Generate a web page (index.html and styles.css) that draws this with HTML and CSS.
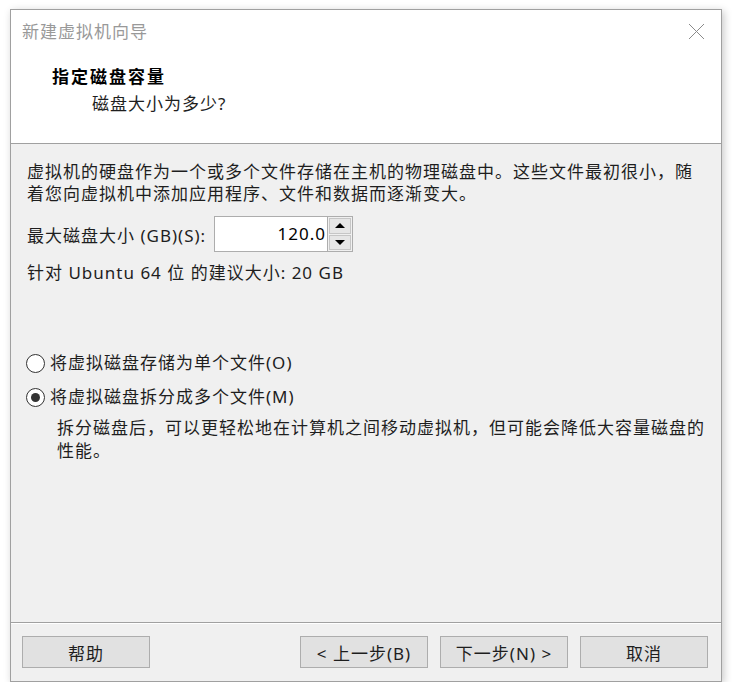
FILE: index.html
```html
<!DOCTYPE html>
<html lang="zh-CN">
<head>
  <meta charset="UTF-8">
  <title>新建虚拟机向导</title>
  <link rel="stylesheet" href="styles.css">
</head>
<body>

  <div class="window">
    <div class="head">
      <div class="titlebar">
        <span class="title">新建虚拟机向导</span>
        <svg class="close" width="17" height="17" viewBox="0 0 17 17">
          <path d="M1 1 L16 16 M16 1 L1 16" stroke="#8a8a8a" stroke-width="1" fill="none"/>
        </svg>
      </div>
      <h1>指定磁盘容量</h1>
      <p class="sub">磁盘大小为多少?</p>
    </div>

    <div class="body">
      <p class="intro">虚拟机的硬盘作为一个或多个文件存储在主机的物理磁盘中。这些文件最初很小，随<br>着您向虚拟机中添加应用程序、文件和数据而逐渐变大。</p>

      <div class="size-row">
        <label>最大磁盘大小 (GB)(S):</label>
        <div class="spin">
          <span class="value">120.0</span>
          <div class="arrows">
            <span class="arrow up"></span>
            <span class="arrow down"></span>
          </div>
        </div>
      </div>

      <p class="hint">针对 Ubuntu 64 位 的建议大小: 20 GB</p>

      <div class="options">
        <div class="radio"><span class="dot"></span>将虚拟磁盘存储为单个文件(O)</div>
        <div class="radio checked"><span class="dot"></span>将虚拟磁盘拆分成多个文件(M)</div>
        <p class="note">拆分磁盘后，可以更轻松地在计算机之间移动虚拟机，但可能会降低大容量磁盘的<br>性能。</p>
      </div>
    </div>

    <div class="footer">
      <button class="btn">帮助</button>
      <div class="nav">
        <button class="btn">&lt; 上一步(B)</button>
        <button class="btn">下一步(N) &gt;</button>
        <button class="btn">取消</button>
      </div>
    </div>
  </div>

</body>
</html>
```

FILE: styles.css
```css
:root {
  --face: #f0f0f0;
  --edge: #a0a0a0;
  --btn: #e1e1e1;
  --btn-edge: #adadad;
  --ink: #1e1e1e;
}
* { box-sizing: border-box; }
body {
  margin: 0;
  background: #fff;
  font-family: "Noto Sans", "Noto Sans CJK SC", sans-serif;
  font-size: 17px;
  letter-spacing: 1px;
  color: var(--ink);
}
.window {
  margin: 9px 0 0 10px;
  width: 712px;
  height: 673px;
  border: 1px solid var(--edge);
  background: var(--face);
  box-shadow: 2px 2px 8px rgba(0, 0, 0, 0.22);
  display: flex;
  flex-direction: column;
}

/* header */
.head {
  height: 134px;
  background: #fff;
  border-bottom: 1px solid var(--edge);
}
.titlebar {
  height: 44px;
  display: flex;
  align-items: center;
  justify-content: space-between;
  padding: 0 16px 0 11px;
}
.title {
  color: #999;
  font-size: 17px;
  line-height: 44px;
}
.close { margin-top: -2px; }
.head h1 {
  margin: 12px 0 0 41px;
  font-size: 17px;
  line-height: 22px;
  font-weight: bold;
  letter-spacing: 2px;
  color: #000;
}
.sub {
  margin: 5px 0 0 81px;
  line-height: 22px;
}

/* body */
.body {
  flex: 1;
  padding: 17px 16px 0;
}
.body p { margin: 0; }
.intro { line-height: 22px; }
.size-row {
  display: flex;
  align-items: center;
  margin-top: 11px;
}
.size-row label { width: 187px; }
.spin {
  display: flex;
  width: 139px;
  height: 36px;
  border: 1px solid var(--btn-edge);
  background: #fff;
}
.value {
  width: 112px;
  text-align: right;
  padding-right: 1px;
  line-height: 34px;
  color: #000;
}
.arrows {
  flex: 1;
  display: flex;
  flex-direction: column;
  gap: 1px;
  padding: 1px;
  background: var(--face);
  border-left: 1px solid var(--btn-edge);
}
.arrow {
  flex: 1;
  background: #e6e6e6;
  border: 1px solid #c6c6c6;
  display: flex;
  align-items: center;
  justify-content: center;
}
.arrow::after {
  content: "";
  border-left: 5px solid transparent;
  border-right: 5px solid transparent;
}
.up::after { border-bottom: 5px solid #000; }
.down::after { border-top: 5px solid #000; }
.hint {
  margin-top: 10px !important;
  line-height: 22px;
}

.options { margin-top: 68px; }
.radio {
  display: flex;
  align-items: center;
  line-height: 22px;
  margin-bottom: 12px;
}
.dot {
  width: 19px;
  height: 19px;
  margin: 0 5px 0 -1px;
  border: 1px solid #333;
  border-radius: 50%;
  background: #fff;
  display: flex;
  align-items: center;
  justify-content: center;
}
.checked .dot::after {
  content: "";
  width: 9px;
  height: 9px;
  border-radius: 50%;
  background: #333;
}
.note {
  margin: -4px 0 0 30px !important;
  line-height: 23px;
}

/* footer */
.footer {
  display: flex;
  padding: 13px 13px 13px 11px;
  border-top: 1px solid var(--edge);
  box-shadow: inset 0 1px #fff;
}
.nav {
  margin-left: auto;
  display: flex;
  gap: 12px;
}
.btn {
  width: 128px;
  height: 32px;
  background: var(--btn);
  border: 1px solid var(--btn-edge);
  font-family: inherit;
  font-size: 17px;
  letter-spacing: 1px;
  color: var(--ink);
  padding: 0;
}
```
